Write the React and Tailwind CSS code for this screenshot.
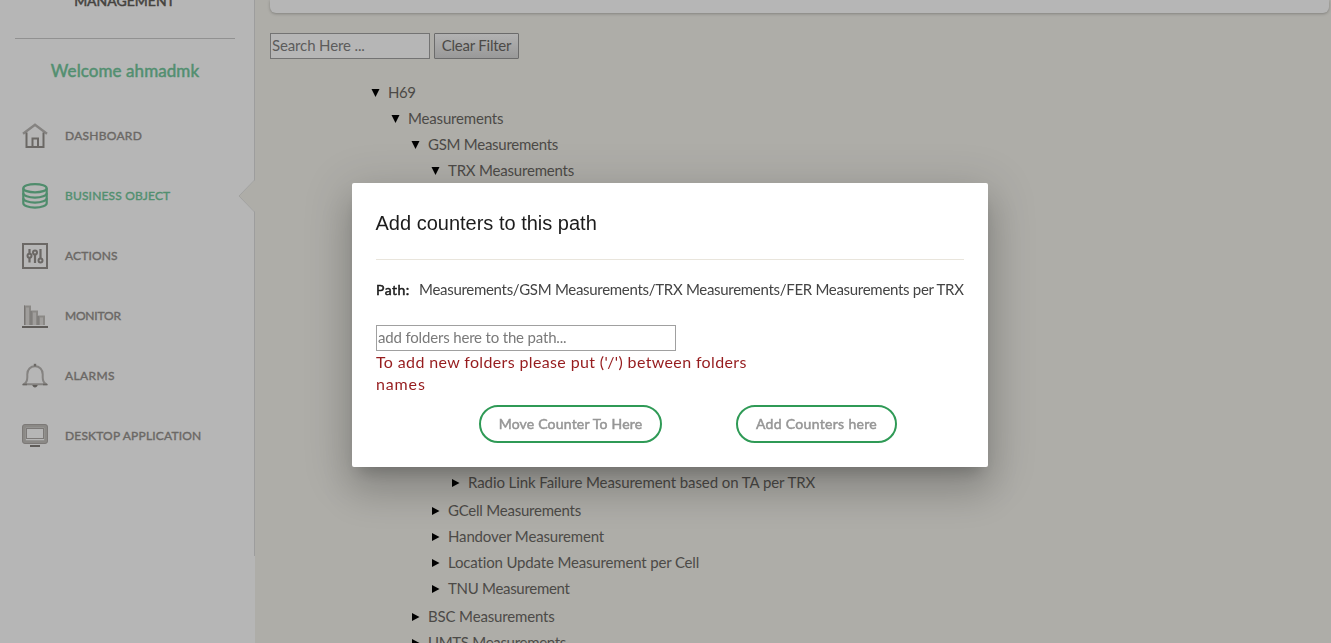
import React from "react";

const HomeIcon = () => (
  <svg width="26" height="26" viewBox="0 0 26 26" fill="none" stroke="#6b6865" strokeWidth="2">
    <path d="M1 10.700 13 1.800l12 8.900" stroke="#858381" strokeWidth="2.400" />
    <path d="M4.500 9.500V24M21.500 9.500V24M3.500 24h19M10.500 23.500V15.500h5.500v8" />
  </svg>
);

const DatabaseIcon = () => (
  <svg width="26" height="26" viewBox="0 0 26 26" fill="none" stroke="#4f8c6c" strokeWidth="2.200">
    <ellipse cx="13" cy="5.200" rx="11.700" ry="4.100" />
    <path d="M1.300 5.200v15c0 2.400 5.200 4.400 11.700 4.400s11.700-2 11.700-4.400v-15" />
    <path d="M1.300 10.200c0 2.400 5.200 4.400 11.700 4.400s11.700-2 11.700-4.400M1.300 15.200c0 2.400 5.200 4.400 11.700 4.400s11.700-2 11.700-4.400" />
  </svg>
);

const SlidersIcon = () => (
  <svg width="26" height="26" viewBox="0 0 26 26" fill="none" stroke="#6b6865" strokeWidth="2">
    <rect x="1" y="1" width="24" height="24" />
    <path d="M7.500 6v4.500M7.500 15v4.500M13 12v8M18.500 6v9.500" strokeWidth="2.200" />
    <circle cx="7.500" cy="12.800" r="2" />
    <circle cx="13" cy="9.500" r="2" />
    <circle cx="18.500" cy="17.500" r="2" />
  </svg>
);

const BarsIcon = () => (
  <svg width="26" height="26" viewBox="0 0 26 26" fill="none" stroke="#8b8986" strokeWidth="2">
    <path d="M3 22V3.500h5V22M10 22V8.500h5V22M17 22v-8.500h5V22" fill="#a09e9c" />
    <path d="M2.500 22V2.500M9 22V8M16 22v-9" stroke="#777472" strokeWidth="1" />
    <path d="M0 24h26" stroke="#5f5c59" strokeWidth="2" />
  </svg>
);

const BellIcon = () => (
  <svg width="26" height="26" viewBox="0 0 26 26" fill="none" stroke="#858381" strokeWidth="2">
    <path d="M2 21.200c2.600-1.600 3.300-3.500 3.300-7v-3C5.300 6.500 8.500 3.300 13 3.300s7.700 3.200 7.700 7.900v3c0 3.500.7 5.400 3.300 7z" />
    <path d="M1 21.500h4M21 21.500h4" stroke="#6b6865" strokeWidth="1.400" />
    <path d="M13 .8v2.500" stroke="#6b6865" strokeWidth="2.400" />
    <path d="M10.300 22h5.400c-.4 1.700-1.300 2.400-2.700 2.400s-2.300-.7-2.700-2.400z" fill="#5f5c59" stroke="none" />
  </svg>
);

const DesktopIcon = () => (
  <svg width="26" height="26" viewBox="0 0 26 26" fill="none">
    <rect x="2" y="3" width="22" height="16" rx="1.500" stroke="#8b8986" strokeWidth="3.600" />
    <rect x=".5" y="1.500" width="25" height="19" rx="2.500" stroke="#7c7977" strokeWidth="1" />
    <rect x="4.500" y="5.500" width="17" height="10" stroke="#7c7977" strokeWidth="1" />
    <path d="M8 23h10" stroke="#5f5c59" strokeWidth="2" />
  </svg>
);

const NAV = [
  { label: "DASHBOARD", Icon: HomeIcon, track: "tracking-[0.27px]" },
  { label: "BUSINESS OBJECT", Icon: DatabaseIcon, active: true, track: "tracking-[0.17px]" },
  { label: "ACTIONS", Icon: SlidersIcon, track: "tracking-[0.15px]" },
  { label: "MONITOR", Icon: BarsIcon, track: "tracking-[-0.2px]" },
  { label: "ALARMS", Icon: BellIcon, track: "tracking-[0.37px]" },
  { label: "DESKTOP APPLICATION", Icon: DesktopIcon, track: "tracking-[0.18px]" },
];

const Arrow = ({ open }) => (
  <svg className="-ml-px mr-2 shrink-0" width="9" height="8" viewBox="0 0 9 8">
    <path d={open ? "M.5 0h8l-4 8z" : "M1 0v8l7.500-4z"} fill="#000" />
  </svg>
);

const Row = ({ indent = "pl-0", open, track = "tracking-normal", children }) => (
  <div className={`flex h-[26px] items-center whitespace-nowrap ${indent}`}>
    <Arrow open={open} />
    <span className={`-mt-[2px] ${track}`}>{children}</span>
  </div>
);

function Sidebar() {
  return (
    <aside className="h-full w-[255px] shrink-0 bg-[#b6b6b6]">
      <div className="relative h-[556px] border-r border-[#9d9d9d]">
        <div className="flex h-[39px] flex-col items-center">
          <div className="-mt-[9px] mr-[5px] text-[14px] leading-[20px] text-[#45433f] [-webkit-text-stroke:0.5px_#45433f]">
            MANAGEMENT
          </div>
          <div className="mt-auto ml-[15px] h-px w-[220px] self-start bg-[#919191]" />
        </div>
        <div className="mt-[20px] mr-[4px] text-center text-[17px] leading-[24px] tracking-[0.08px] text-[#528f70] [-webkit-text-stroke:0.5px_#528f70]">
          Welcome ahmadmk
        </div>
        <nav className="mt-[23px] flex flex-col">
          {NAV.map(({ label, Icon, active, track }) => (
            <a
              key={label}
              className={`flex h-[60px] items-center gap-[17px] pl-[22px] text-[12px] ${active ? "text-[#528f70] [-webkit-text-stroke:0.4px_#528f70]" : "text-[#6b6865] [-webkit-text-stroke:0.4px_#6b6865]"}`}
            >
              <Icon />
              <span className={track}>{label}</span>
            </a>
          ))}
        </nav>
        <svg className="absolute top-[180px] -right-px" width="17" height="32" viewBox="0 0 17 32">
          <path d="M17 0 1 16l16 16z" fill="#aeada8" />
          <path d="M16.500 0 1 16l15.500 16" fill="none" stroke="#a2a2a0" />
        </svg>
      </div>
    </aside>
  );
}

function Main() {
  return (
    <main className="min-w-0 flex-1 bg-[#aeada8] pl-[15px] text-[15px] text-[#4c4a47]">
      <div className="mr-[2px] h-[13px] rounded-b-[6px] bg-[#b6b6b6] shadow-[0_1px_3px_rgba(0,0,0,0.25)]" />
      <div className="mt-5 flex gap-1">
        <input
          placeholder="Search Here ..."
          className="h-[26px] w-[160px] border border-[#737373] bg-[#b6b6b6] px-px pb-[2px] tracking-[-0.13px] outline-none placeholder:text-[#5c5c5c]"
        />
        <button className="h-[26px] w-[85px] rounded-[1px] border border-[#6b6b6b] bg-linear-to-b from-[#b2b2b2] to-[#999] pb-[2px] tracking-[-0.22px] whitespace-nowrap">
          Clear Filter
        </button>
      </div>
      <div className="mt-[21px] pl-[102px]">
        <Row open track="tracking-[-0.5px]">H69</Row>
        <Row open indent="pl-5" track="tracking-[-0.17px]">Measurements</Row>
        <Row open indent="pl-10" track="tracking-[-0.26px]">GSM Measurements</Row>
        <Row open indent="pl-[60px]" track="tracking-[-0.2px]">TRX Measurements</Row>
        <div className="h-[286px]" />
        <Row indent="pl-20" track="tracking-[-0.08px]">Radio Link Failure Measurement based on TA per TRX</Row>
        <div className="h-[2px]" />
        <Row indent="pl-[60px]" track="tracking-[-0.23px]">GCell Measurements</Row>
        <Row indent="pl-[60px]" track="tracking-[-0.15px]">Handover Measurement</Row>
        <Row indent="pl-[60px]" track="tracking-[-0.16px]">Location Update Measurement per Cell</Row>
        <Row indent="pl-[60px]" track="tracking-[-0.3px]">TNU Measurement</Row>
        <div className="h-[2px]" />
        <Row indent="pl-10" track="tracking-[-0.15px]">BSC Measurements</Row>
        <Row indent="pl-10" track="tracking-[-0.3px]">UMTS Measurements</Row>
      </div>
    </main>
  );
}

function Dialog() {
  return (
    <div className="fixed inset-0 flex items-start pt-[183px] pl-[352px]">
      <section className="h-[284px] w-[636px] rounded-[2px] bg-white px-6 text-[15px] whitespace-nowrap text-[#444] shadow-[0_11px_15px_-7px_rgba(0,0,0,0.2),0_24px_38px_3px_rgba(0,0,0,0.14),0_9px_46px_8px_rgba(0,0,0,0.12)]">
        <h2 className="flex h-[77px] items-center border-b border-[#e9e5dc] pt-[4px] font-['Liberation_Sans',sans-serif] text-[20px] text-[#1c1c1c]">
          <span className="-ml-[0.5px]">Add counters to this path</span>
        </h2>
        <div className="mt-[18px] flex h-[22px] items-center">
          <span className="w-[43px] text-[14px] tracking-[0.45px] text-[#1c1c1c] [-webkit-text-stroke:0.5px_#1c1c1c]">Path:</span>
          <span className="tracking-[-0.295px]">Measurements/GSM Measurements/TRX Measurements/FER Measurements per TRX</span>
        </div>
        <input
          placeholder="add folders here to the path..."
          className="mt-[25px] block h-[26px] w-[300px] border border-[#a0a0a0] px-px pb-[2px] tracking-[-0.17px] outline-none placeholder:text-[#7a7a7a]"
        />
        <p className="text-[16px] leading-[22px] tracking-[0.36px] text-[#961c1e]">
          To add new folders please put ('/') between folders
          <br />
          <span className="tracking-[0.85px]">names</span>
        </p>
        <div className="mt-[10px] ml-[103px] flex gap-[74px] text-[14px] text-[#969696] [-webkit-text-stroke:0.5px_#969696]">
          <button className="h-[38px] w-[183px] rounded-full border-2 border-[#2f9a56] pb-[2px] tracking-[0.2px]">Move Counter To Here</button>
          <button className="h-[38px] w-[161px] rounded-full border-2 border-[#2f9a56] pb-[2px] tracking-[0.32px]">Add Counters here</button>
        </div>
      </section>
    </div>
  );
}

export default function App() {
  return (
    <div className="flex h-screen overflow-hidden font-['Lato',sans-serif]">
      <Sidebar />
      <Main />
      <Dialog />
    </div>
  );
}
